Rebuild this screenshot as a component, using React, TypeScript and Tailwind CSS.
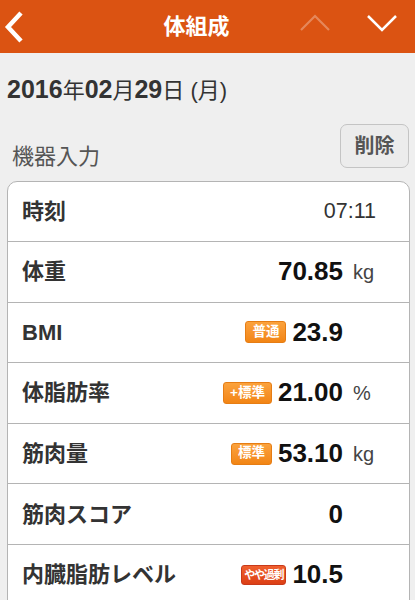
import React from "react";

type Badge = {
  text: string;
  tone: "orange" | "red";
};

type Row = {
  label: string;
  value: string;
  unit?: string;
  badge?: Badge;
  plain?: boolean;
};

const rows: Row[] = [
  { label: "時刻", value: "07:11", plain: true },
  { label: "体重", value: "70.85", unit: "kg" },
  { label: "BMI", value: "23.9", badge: { text: "普通", tone: "orange" } },
  { label: "体脂肪率", value: "21.00", unit: "%", badge: { text: "+標準", tone: "orange" } },
  { label: "筋肉量", value: "53.10", unit: "kg", badge: { text: "標準", tone: "orange" } },
  { label: "筋肉スコア", value: "0" },
  { label: "内臓脂肪レベル", value: "10.5", badge: { text: "やや過剰", tone: "red" } },
];

const font = { fontFamily: '"Liberation Sans", "Noto Sans CJK JP", sans-serif' };

function StatusBadge({ badge }: { badge: Badge }) {
  if (badge.tone === "red") {
    return (
      <span className="mr-[6px] flex h-[20px] items-center rounded-[3px] border border-[#c8391a] bg-gradient-to-b from-[#f0602e] to-[#dc3f15] px-[2px] text-[11px] font-bold tracking-[-1.2px] text-white">
        {badge.text}
      </span>
    );
  }
  return (
    <span className="mr-[6px] flex h-[22px] items-center rounded-[3px] border border-[#e67d14] bg-gradient-to-b from-[#fba23c] to-[#f28513] px-[6px] text-[13.5px] font-bold text-white">
      {badge.text}
    </span>
  );
}

function DataRow({ row, first }: { row: Row; first: boolean }) {
  return (
    <div
      className={`flex items-center border-b border-[#b4b4b4] pl-[14px] ${
        first ? "h-[60px]" : "h-[60.6px]"
      }`}
    >
      <div className="flex-1 text-[22px] font-bold text-[#333]">{row.label}</div>
      {row.plain ? (
        <div className="pr-[33px] text-[21.5px] text-[#333]">{row.value}</div>
      ) : (
        <div className="flex items-center">
          {row.badge && <StatusBadge badge={row.badge} />}
          <span className="text-[26px] font-bold text-[#111]">{row.value}</span>
          <span className="w-[66px] pl-[10px] text-[20px] text-[#444]">{row.unit ?? ""}</span>
        </div>
      )}
    </div>
  );
}

export default function App() {
  return (
    <div className="h-[600px] w-[415px] overflow-hidden bg-[#efefef]" style={font}>
      <div className="flex h-[53px] items-center bg-[#db5312]">
        <div className="flex w-[95px] items-center pl-[3px]">
          <svg width="24" height="34" viewBox="0 0 24 34">
            <polyline points="18,3 5,17 18,31" fill="none" stroke="white" strokeWidth="4.5" />
          </svg>
        </div>
        <div className="flex-1 text-center text-[22px] font-bold text-white">体組成</div>
        <div className="mb-[8px] flex w-[117px] items-center gap-[35px] pl-[1px]">
          <svg width="32" height="18" viewBox="0 0 32 18" className="opacity-30">
            <polyline points="2,16 16,2 30,16" fill="none" stroke="white" strokeWidth="2.2" />
          </svg>
          <svg width="32" height="18" viewBox="0 0 32 18">
            <polyline points="2,2 16,16 30,2" fill="none" stroke="white" strokeWidth="2.5" />
          </svg>
        </div>
      </div>

      <div className="mt-[21px] pl-[7px] leading-[30px] text-[#333]">
        <span className="text-[25px] font-bold">2016</span>
        <span className="text-[22px]">年</span>
        <span className="text-[25px] font-bold">02</span>
        <span className="text-[22px]">月</span>
        <span className="text-[25px] font-bold">29</span>
        <span className="text-[22px]">日 (月)</span>
      </div>

      <div className="mt-[16px] flex items-start justify-between pl-[12px] pr-[6px]">
        <div className="mt-[18px] text-[22px] leading-[30px] text-[#555]">機器入力</div>
        <button className="h-[44px] w-[69px] rounded-[7px] border border-[#c4c4c4] bg-[#ececec] text-[20px] font-bold text-[#555]">
          削除
        </button>
      </div>

      <div className="ml-[7px] mr-[5px] mt-[9px] rounded-t-[10px] border border-[#b4b4b4] bg-white">
        {rows.map((row, i) => (
          <DataRow key={row.label} row={row} first={i === 0} />
        ))}
      </div>
    </div>
  );
}
